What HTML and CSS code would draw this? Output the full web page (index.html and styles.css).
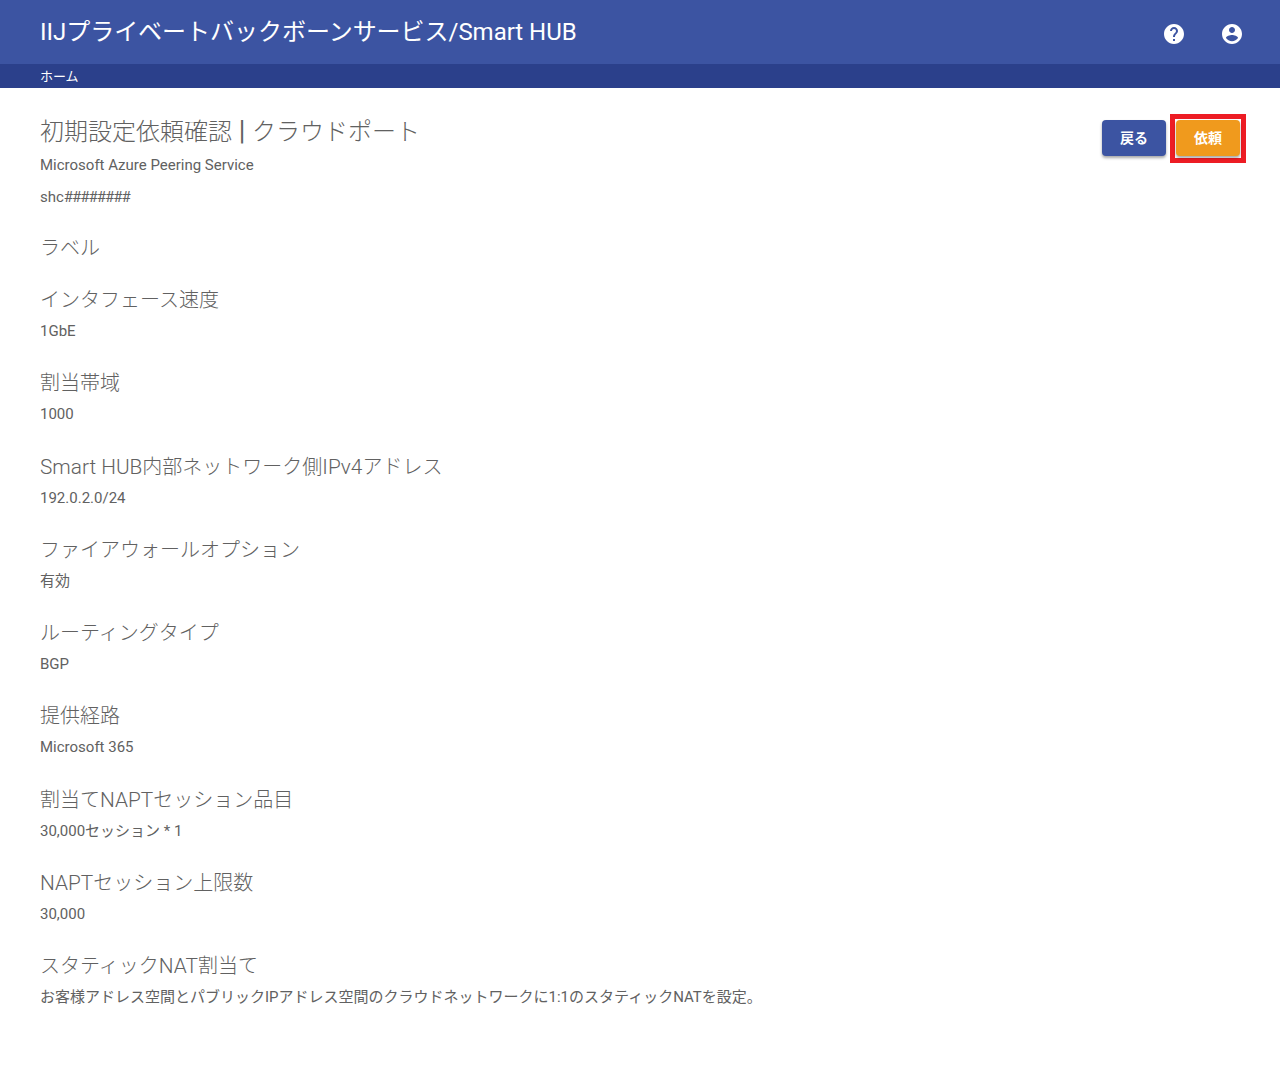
FILE: index.html
```html
<!DOCTYPE html>
<html lang="ja">
<head>
<meta charset="utf-8">
<title>Smart HUB</title>
<link rel="stylesheet" href="styles.css">
</head>
<body>
<header class="topbar">
  <div class="brand">IIJプライベートバックボーンサービス/Smart HUB</div>
  <div class="top-icons">
    <svg class="icon" viewBox="0 0 24 24"><path fill="#fff" d="M12 2C6.48 2 2 6.48 2 12s4.48 10 10 10 10-4.48 10-10S17.52 2 12 2zm1 17h-2v-2h2v2zm2.07-7.75l-.9.92C13.45 12.9 13 13.5 13 15h-2v-.5c0-1.1.45-2.1 1.17-2.83l1.24-1.26c.37-.36.59-.86.59-1.41 0-1.1-.9-2-2-2s-2 .9-2 2H8c0-2.21 1.79-4 4-4s4 1.79 4 4c0 .88-.36 1.68-.93 2.25z"/></svg>
    <svg class="icon" viewBox="0 0 24 24"><path fill="#fff" d="M12 2C6.48 2 2 6.48 2 12s4.48 10 10 10 10-4.48 10-10S17.52 2 12 2zm0 3c1.66 0 3 1.34 3 3s-1.34 3-3 3-3-1.34-3-3 1.34-3 3-3zm0 14.2c-2.5 0-4.71-1.28-6-3.22.03-1.99 4-3.08 6-3.08 1.99 0 5.97 1.09 6 3.08-1.29 1.94-3.5 3.22-6 3.22z"/></svg>
  </div>
</header>
<nav class="crumb">ホーム</nav>
<main class="content">
  <div class="head">
    <div>
      <h1 class="title">初期設定依頼確認<span class="pipe"> | </span>クラウドポート</h1>
      <p class="sub">Microsoft Azure Peering Service</p>
      <p class="sub">shc<span class="hashes">########</span></p>
    </div>
    <div class="actions">
      <button class="btn btn-back">戻る</button>
      <span class="highlight"><button class="btn btn-go">依頼</button></span>
    </div>
  </div>
  <section class="row row-empty"><h2 class="label">ラベル</h2></section>
  <section class="row"><h2 class="label">インタフェース速度</h2><p class="value">1GbE</p></section>
  <section class="row"><h2 class="label">割当帯域</h2><p class="value">1000</p></section>
  <section class="row"><h2 class="label"><span class="latin">Smart HUB</span>内部ネットワーク側<span class="latin">IPv4</span>アドレス</h2><p class="value">192.0.2.0/24</p></section>
  <section class="row"><h2 class="label">ファイアウォールオプション</h2><p class="value">有効</p></section>
  <section class="row"><h2 class="label">ルーティングタイプ</h2><p class="value">BGP</p></section>
  <section class="row"><h2 class="label">提供経路</h2><p class="value">Microsoft 365</p></section>
  <section class="row"><h2 class="label">割当て<span class="latin">NAPT</span>セッション品目</h2><p class="value">30,000セッション * 1</p></section>
  <section class="row"><h2 class="label"><span class="latin">NAPT</span>セッション上限数</h2><p class="value">30,000</p></section>
  <section class="row"><h2 class="label">スタティック<span class="latin">NAT</span>割当て</h2><p class="value">お客様アドレス空間とパブリックIPアドレス空間のクラウドネットワークに1:1のスタティックNATを設定。</p></section>
</main>
</body>
</html>
```
FILE: styles.css
```css
* { box-sizing: border-box; }
html, body { margin: 0; padding: 0; }
body {
  background: #fff;
  color: #616161;
  font-family: Roboto, "Noto Sans CJK JP", sans-serif;
  height: 1080px;
  overflow: hidden;
}
.topbar {
  height: 64px;
  background: #3c54a2;
  display: flex;
  align-items: center;
  justify-content: space-between;
  padding: 0 36px 0 40px;
}
.brand {
  color: #fff;
  font-size: 24px;
  line-height: 64px;
  letter-spacing: -0.03px;
}
.top-icons { display: flex; gap: 34px; align-items: center; padding-top: 4px; }
.icon { width: 24px; height: 24px; display: block; }
.crumb {
  height: 24px;
  background: #2b408b;
  color: #fff;
  font-size: 13px;
  line-height: 24px;
  padding: 1px 0 0 40px;
}
.content { padding: 24px 34px 0 40px; }
.head {
  display: flex;
  justify-content: space-between;
  align-items: flex-start;
  margin-bottom: 13px;
}
.title {
  margin: 0;
  font-size: 24px;
  font-weight: 300;
  line-height: 38px;
}
.pipe { font-size: 27px; font-weight: 400; white-space: pre; }
.sub { margin: 0 0 12px; font-size: 15px; line-height: 20px; }
.title + .sub { margin-top: 4px; }
.hashes { letter-spacing: -1px; }
.actions { display: flex; align-items: flex-start; gap: 4px; margin-top: 2px; }
.btn {
  border: 0;
  border-radius: 4px;
  width: 64px;
  height: 36px;
  color: #fff;
  font-family: inherit;
  font-size: 14px;
  font-weight: 700;
  padding: 0 0 2px;
  box-shadow: 0 2px 3px rgba(0,0,0,.35);
}
.btn-back { background: #3c54a2; margin-top: 6px; }
.btn-go { background: #f09a1d; display: block; }
.highlight {
  display: block;
  border: 5px solid #ed1c24;
  padding: 1px 1px 2px;
  background: #fff;
}
.label {
  margin: 0;
  font-size: 20px;
  font-weight: 300;
  line-height: 32px;
}
.latin { font-size: 20.8px; }
.value { margin: 0; font-size: 15px; line-height: 30px; height: 30px; }
.row { height: 83.3px; }
.row-empty { height: 52px; }
```
